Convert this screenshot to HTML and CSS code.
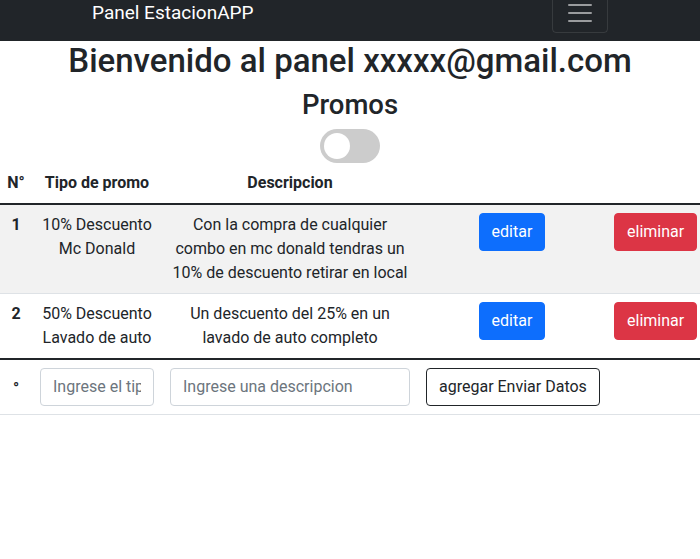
FILE: index.html
```html
<!DOCTYPE html>
<html lang="es">
<head>
<meta charset="utf-8">
<title>Panel EstacionAPP</title>
<link rel="stylesheet" href="styles.css">
</head>
<body>
<nav class="navbar">
  <div class="nav-inner">
    <a class="brand" href="#">Panel EstacionAPP</a>
    <button class="toggler" type="button" aria-label="Menu">
      <svg class="toggler-icon" viewBox="0 0 30 30" width="30" height="30"><path d="M4 7h22M4 15h22M4 23h22" stroke="rgba(255,255,255,0.55)" stroke-width="2" stroke-linecap="round" stroke-miterlimit="10" fill="none"/></svg>
    </button>
  </div>
</nav>
<main class="panel">
  <h1 class="title">Bienvenido al panel xxxxx@gmail.com</h1>
  <h2 class="subtitle">Promos</h2>
  <div class="switch-row">
    <label class="switch"><input type="checkbox"><span class="slider"></span></label>
  </div>
  <table class="promos">
    <colgroup>
      <col class="c-num"><col class="c-tipo"><col class="c-desc"><col class="c-edit"><col class="c-del">
    </colgroup>
    <thead>
      <tr><th class="num">N°</th><th>Tipo de promo</th><th>Descripcion</th><th></th><th></th></tr>
    </thead>
    <tbody>
      <tr class="striped">
        <th class="num">1</th>
        <td>10% Descuento Mc Donald</td>
        <td>Con la compra de cualquier combo en mc donald tendras un 10% de descuento retirar en local</td>
        <td><button class="btn btn-blue" type="button">editar</button></td>
        <td><button class="btn btn-red" type="button">eliminar</button></td>
      </tr>
      <tr>
        <th class="num">2</th>
        <td>50% Descuento Lavado de auto</td>
        <td>Un descuento del 25% en un lavado de auto completo</td>
        <td><button class="btn btn-blue" type="button">editar</button></td>
        <td><button class="btn btn-red" type="button">eliminar</button></td>
      </tr>
    </tbody>
    <tbody>
      <tr>
        <th class="num deg">°</th>
        <td><input class="field" type="text" placeholder="Ingrese el tipo de promo"></td>
        <td><input class="field" type="text" placeholder="Ingrese una descripcion"></td>
        <td><button class="btn btn-outline" type="button">agregar Enviar Datos</button></td>
        <td></td>
      </tr>
    </tbody>
  </table>
</main>
</body>
</html>
```
FILE: styles.css
```css
* { box-sizing: border-box; }

html, body {
  margin: 0;
  padding: 0;
  background: #fff;
}

body {
  font-family: "Segoe UI", Roboto, "Liberation Sans", sans-serif;
  font-size: 16px;
  line-height: 1.5;
  color: #212529;
}

.navbar {
  height: 41px;
  padding-bottom: 8px;
  background: #212529;
  display: flex;
  align-items: flex-end;
}

.nav-inner {
  width: 540px;
  margin: 0 auto;
  padding: 0 12px;
  height: 40px;
  flex-shrink: 0;
  display: flex;
  align-items: center;
  justify-content: space-between;
}

.brand {
  color: #fff;
  text-decoration: none;
  font-size: 19px;
  line-height: 30px;
  padding: 5px 0;
}

.toggler {
  display: flex;
  align-items: center;
  justify-content: center;
  width: 56px;
  height: 40px;
  padding: 4px 12px;
  background: transparent;
  border: 1px solid rgba(255, 255, 255, 0.1);
  border-radius: 4px;
}

.toggler-icon { display: block; }

.panel {
  text-align: center;
}

.title {
  margin: 0 0 8px;
  font-size: 33px;
  font-weight: 500;
  line-height: 39px;
}

.subtitle {
  margin: 0 0 8px;
  font-size: 27.5px;
  font-weight: 500;
  line-height: 33px;
}

.switch-row {
  display: flex;
  justify-content: center;
}

.switch {
  position: relative;
  display: block;
  width: 60px;
  height: 34px;
}

.switch input {
  opacity: 0;
  width: 0;
  height: 0;
  position: absolute;
}

.slider {
  position: absolute;
  inset: 0;
  background: #ccc;
  border-radius: 34px;
}

.slider::before {
  content: "";
  position: absolute;
  left: 4px;
  top: 4px;
  width: 26px;
  height: 26px;
  border-radius: 50%;
  background: #fff;
}

.promos {
  width: 700px;
  table-layout: fixed;
  border-collapse: collapse;
  text-align: center;
  margin: 0 0 16px;
}

.c-num { width: 32px; }
.c-tipo { width: 130px; }
.c-desc { width: 256px; }
.c-edit { width: 188px; }
.c-del { width: 94px; }

.promos th,
.promos td {
  padding: 8px;
  border-bottom: 1px solid #dee2e6;
  vertical-align: top;
  font-weight: 400;
}

.promos th {
  font-weight: 700;
}

.promos .num {
  padding-left: 4px;
  padding-right: 4px;
}

.promos .deg {
  vertical-align: middle;
  padding-top: 12px;
}

.promos tbody {
  border-top: 2px solid #212529;
}

.promos thead th {
  border-bottom: 2px solid #212529;
}

.striped > * {
  background: #f2f2f2;
}

.btn {
  display: inline-block;
  font-family: inherit;
  font-size: 16px;
  line-height: 24px;
  padding: 6px 12px;
  border: 1px solid transparent;
  border-radius: 4px;
  white-space: nowrap;
  cursor: pointer;
}

.btn-blue {
  background: #0d6efd;
  border-color: #0d6efd;
  color: #fff;
}

.btn-red {
  background: #dc3545;
  border-color: #dc3545;
  color: #fff;
}

.btn-outline {
  background: #fff;
  border-color: #212529;
  color: #212529;
}

.field {
  display: block;
  width: 100%;
  font-family: inherit;
  font-size: 16px;
  line-height: 24px;
  padding: 6px 12px;
  color: #212529;
  background: #fff;
  border: 1px solid #ced4da;
  border-radius: 4px;
}

.field::placeholder {
  color: #6c757d;
  opacity: 1;
}
```
